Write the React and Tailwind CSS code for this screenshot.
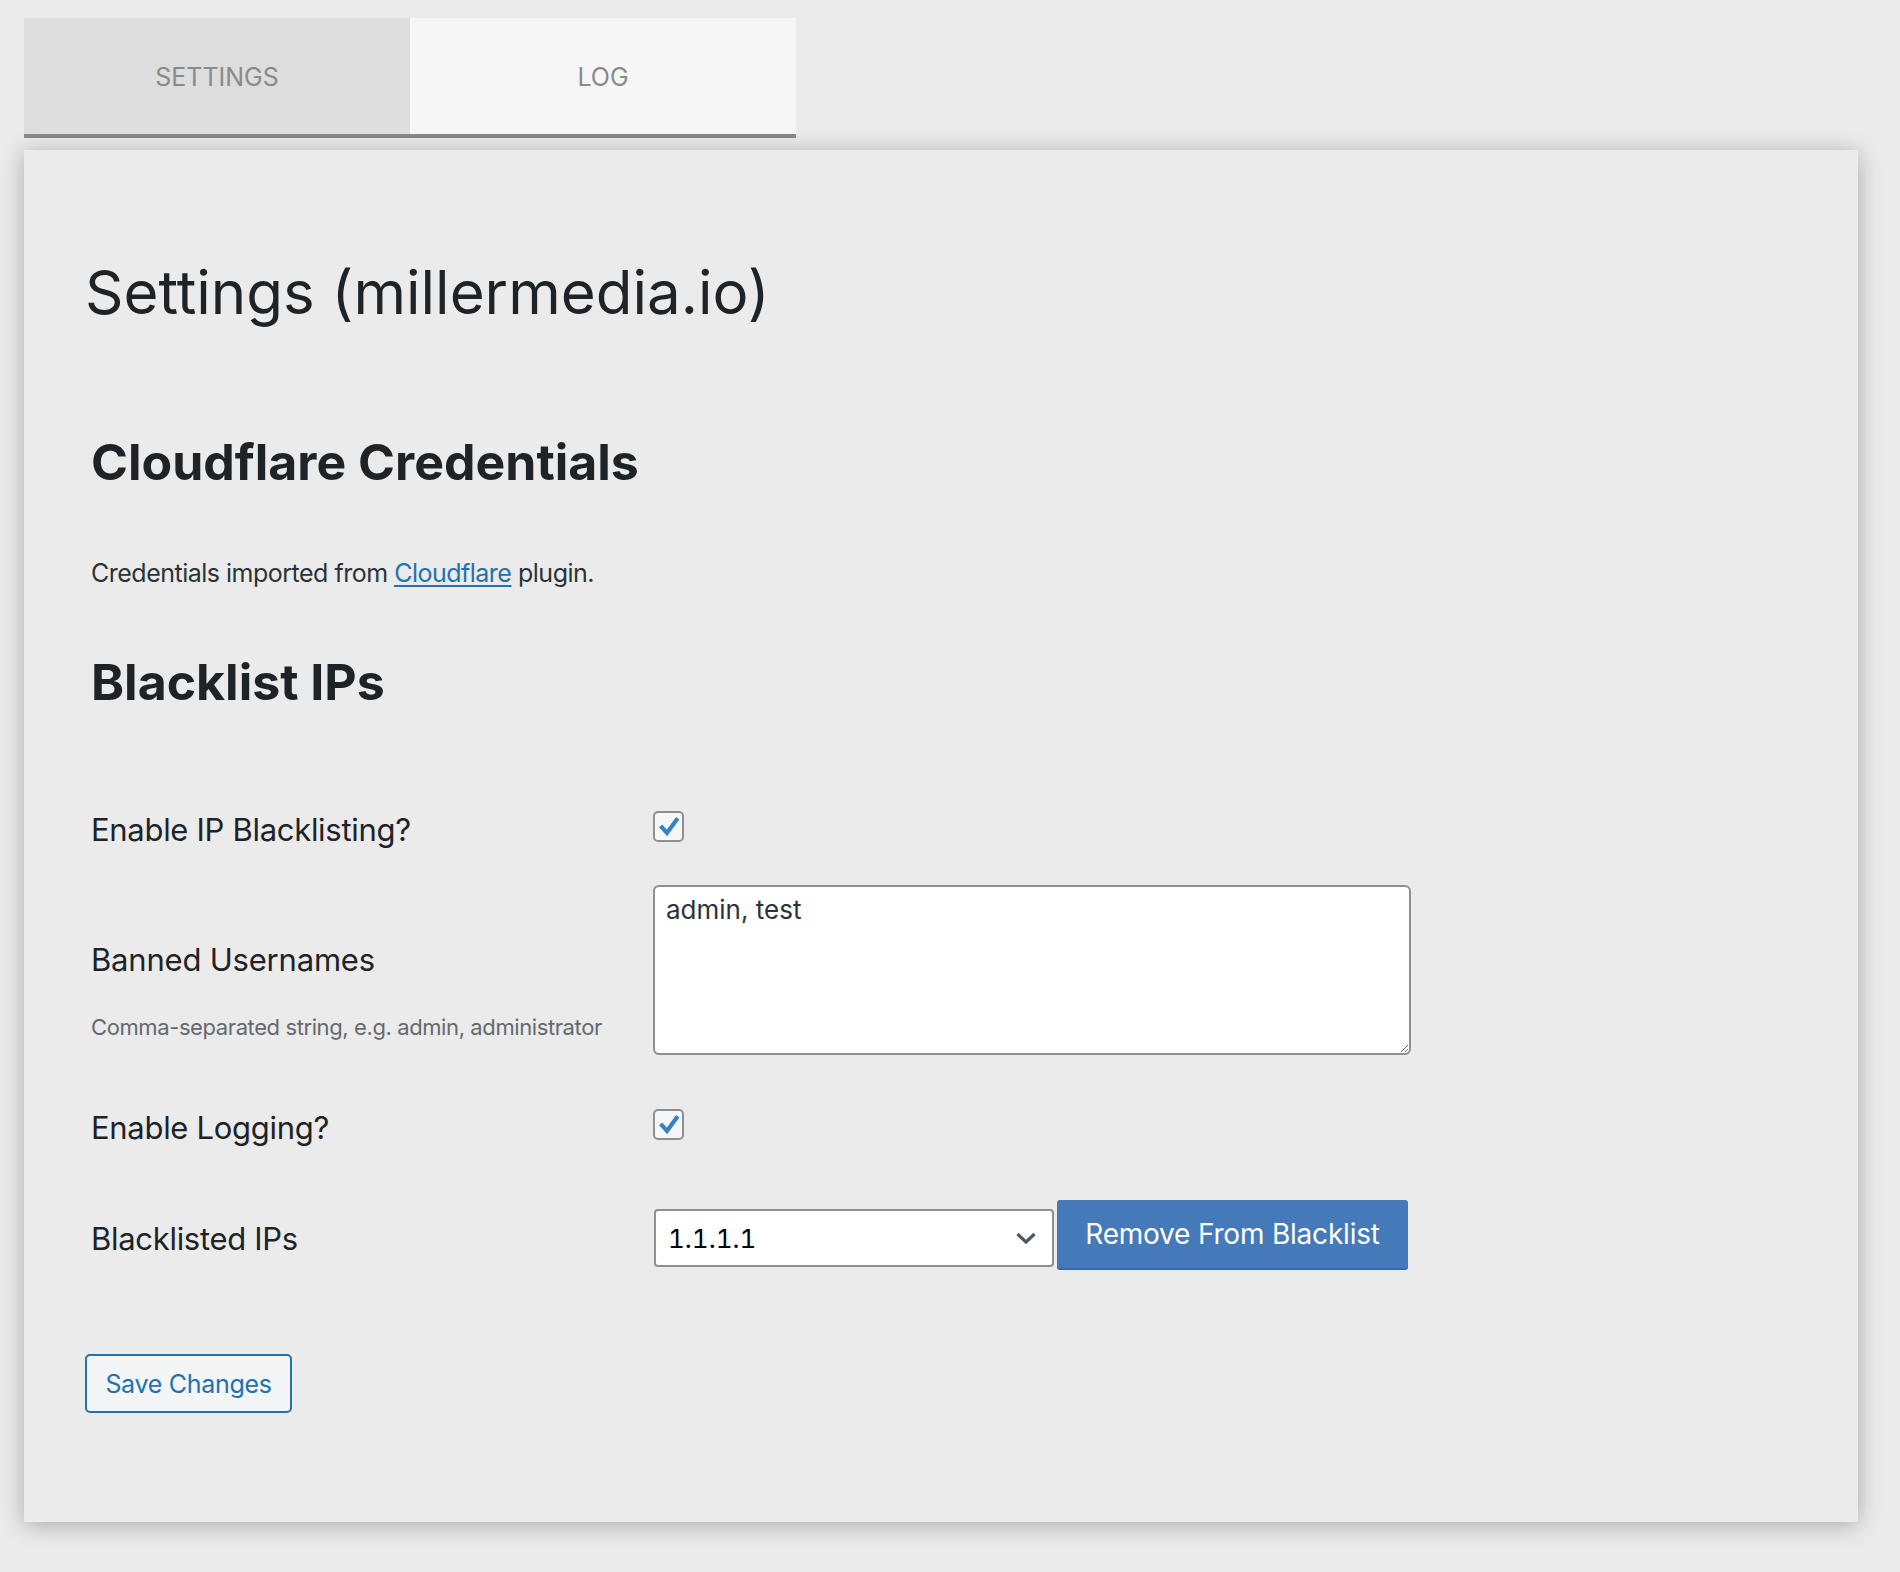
import React from "react";

function Check() {
  return (
    <div className="w-[31px] h-[31px] rounded-[5px] border-2 border-[#8c8f94] bg-[#f6f7f7] flex items-center justify-center">
      <svg width="22" height="22" viewBox="0 0 22 22">
        <path d="M4 11.5 L9 17 L18.5 4" fill="none" stroke="#3582c4" strokeWidth="4.2" strokeLinecap="square" strokeLinejoin="miter" />
      </svg>
    </div>
  );
}

export default function App() {
  return (
    <div className="min-h-screen bg-[#ebebeb] pt-[18px] pl-[24px] pr-[42px] pb-[48px] font-['Inter',sans-serif] text-[#1d2327]">
      {/* Tabs */}
      <div className="flex w-[772px] border-b-4 border-[#8a8a8a]">
        <div className="w-[386px] h-[116px] pt-[4px] bg-[#dddddd] flex items-center justify-center text-[25px] text-[#8a8a8a] uppercase">Settings</div>
        <div className="w-[386px] h-[116px] pt-[4px] bg-[#f6f6f6] flex items-center justify-center text-[25px] text-[#8a8a8a] uppercase">Log</div>
      </div>

      {/* Panel */}
      <div className="mt-[12px] w-[1834px] bg-[#ebebeb] shadow-[0_3px_22px_rgba(0,0,0,0.28)] pt-[112px] pb-[109px] pl-[67px]">
        <h1 className="ml-[-6px] text-[60px] leading-[60px] font-normal">Settings (millermedia.io)</h1>

        <h2 className="mt-[115px] text-[50px] leading-[50px] font-bold">Cloudflare Credentials</h2>

        <p className="mt-[73px] text-[25px] leading-[26px] tracking-[-0.5px] text-[#2c3338]">
          Credentials imported from{" "}
          <a className="text-[#2271b1] underline underline-offset-[3px]" href="#">Cloudflare</a>{" "}
          plugin.
        </p>

        <h2 className="mt-[71px] text-[50px] leading-[50px] font-bold">Blacklist IPs</h2>

        {/* Row 1 */}
        <div className="mt-[104px] flex items-start h-[31px]">
          <div className="w-[562px] mt-[3px] text-[31px] leading-[31px] tracking-[-0.3px]">Enable IP Blacklisting?</div>
          <Check />
        </div>

        {/* Row 2 */}
        <div className="mt-[43px] flex items-start">
          <div className="w-[562px]">
            <div className="mt-[59px] text-[31px] leading-[31px] tracking-[-0.2px]">Banned Usernames</div>
            <div className="mt-[41px] text-[22px] leading-[23px] tracking-[-0.4px] text-[#646970]">Comma-separated string, e.g. admin, administrator</div>
          </div>
          <textarea
            className="w-[758px] h-[170px] border-2 border-[#8c8f94] rounded-[6px] bg-white pt-[10px] px-[11px] text-[26px] leading-[26px] text-[#2c3338] outline-none font-['Inter',sans-serif]"
            defaultValue="admin, test"
            readOnly
          />
        </div>

        {/* Row 3 */}
        <div className="mt-[54px] flex items-start h-[31px]">
          <div className="w-[562px] mt-[3px] text-[31px] leading-[31px] tracking-[-0.3px]">Enable Logging?</div>
          <Check />
        </div>

        {/* Row 4 */}
        <div className="mt-[60px] flex items-start">
          <div className="w-[562px] mt-[23px] text-[31px] leading-[31px] tracking-[-0.3px]">Blacklisted IPs</div>
          <div className="flex items-start">
            <div className="ml-[1px] mt-[9px] w-[400px] h-[58px] border-2 border-[#8c8f94] rounded-[4px] bg-white flex items-center justify-between pl-[12px] pr-[15px]">
              <span className="text-[26px] text-black tabular-nums">1.1.1.1</span>
              <svg width="22" height="14" viewBox="0 0 22 14">
                <path d="M2.5 3 L11 11 L19.5 3" fill="none" stroke="#50575e" strokeWidth="3.2" />
              </svg>
            </div>
            <button className="ml-[3px] w-[351px] h-[70px] rounded-[3px] bg-[#4479ba] border-b-2 border-[#3b69a3] text-white text-[28px] leading-[28px] tracking-[-0.2px]">
              Remove From Blacklist
            </button>
          </div>
        </div>

        {/* Save */}
        <button className="mt-[84px] ml-[-6px] w-[207px] h-[59px] rounded-[5px] border-2 border-[#2271b1] bg-[#f3f5f7] text-[#2271b1] text-[25px] leading-[26px] tracking-[-0.3px] block">
          Save Changes
        </button>
      </div>
    </div>
  );
}
